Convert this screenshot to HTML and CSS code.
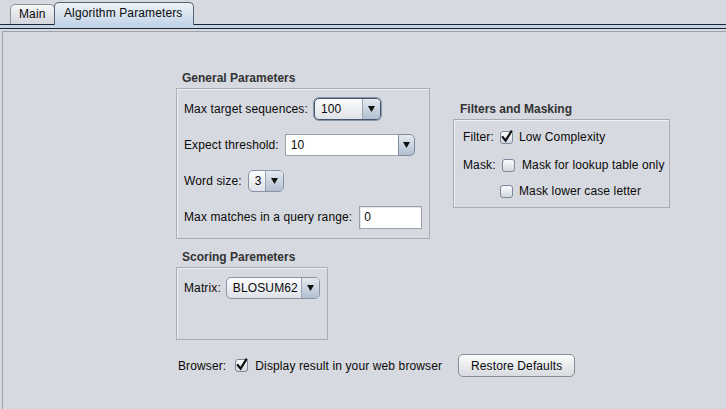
FILE: index.html
```html
<!DOCTYPE html>
<html>
<head>
<meta charset="utf-8">
<link rel="stylesheet" href="styles.css">
</head>
<body>
<div class="app">
  <div class="tabs">
    <div class="tab">Main</div>
    <div class="tab tab-sel">Algorithm Parameters</div>
  </div>
  <div class="strip"></div>
  <div class="panel">
    <div class="top">
      <div class="left">
        <div class="gtitle">General Parameters</div>
        <div class="box box-general">
          <div class="row">
            <span class="lbl">Max target sequences:</span>
            <div class="combo combo-focus w-tgt"><span class="cv">100</span><span class="ca"><svg width="7" height="6" viewBox="0 0 7 6"><polygon points="0,0 7,0 3.5,6" fill="#111"/></svg></span></div>
          </div>
          <div class="row">
            <span class="lbl">Expect threshold:</span>
            <div class="combo-edit"><span class="field">10</span><span class="ebtn"><svg width="7" height="6" viewBox="0 0 7 6"><polygon points="0,0 7,0 3.5,6" fill="#111"/></svg></span></div>
          </div>
          <div class="row">
            <span class="lbl">Word size:</span>
            <div class="combo w-word"><span class="cv">3</span><span class="ca"><svg width="7" height="6" viewBox="0 0 7 6"><polygon points="0,0 7,0 3.5,6" fill="#111"/></svg></span></div>
          </div>
          <div class="row row-wide">
            <span class="lbl">Max matches in a query range:</span>
            <span class="tfield">0</span>
          </div>
        </div>
        <div class="gtitle gtitle-second">Scoring Paremeters</div>
        <div class="box box-scoring">
          <div class="row row-tight">
            <span class="lbl">Matrix:</span>
            <div class="combo w-matrix"><span class="cv">BLOSUM62</span><span class="ca"><svg width="7" height="6" viewBox="0 0 7 6"><polygon points="0,0 7,0 3.5,6" fill="#111"/></svg></span></div>
          </div>
        </div>
      </div>
      <div class="right">
        <div class="gtitle gtitle-filter">Filters and Masking</div>
        <div class="box box-filter">
          <div class="frow">
            <span class="flbl">Filter:</span>
            <span class="cb"><svg width="13" height="13" viewBox="0 0 13 13"><path d="M2.8 6.2 L5.6 9.6 L11.2 0.6" fill="none" stroke="#111" stroke-width="2.2" stroke-linecap="square"/></svg></span>
            <span>Low Complexity</span>
          </div>
          <div class="frow frow-2">
            <span class="flbl flbl-mask">Mask:</span>
            <span class="cb"></span>
            <span class="ctext-wide">Mask for lookup table only</span>
          </div>
          <div class="frow frow-3">
            <span class="flbl"></span>
            <span class="cb"></span>
            <span>Mask lower case letter</span>
          </div>
        </div>
      </div>
    </div>
    <div class="bottom">
      <span>Browser:</span>
      <span class="cb cb-browser"><svg width="13" height="13" viewBox="0 0 13 13"><path d="M2.8 6.2 L5.6 9.6 L11.2 0.6" fill="none" stroke="#111" stroke-width="2.2" stroke-linecap="square"/></svg></span>
      <span>Display result in your web browser</span>
      <div class="btn">Restore Defaults</div>
    </div>
  </div>
</div>
</body>
</html>
```

FILE: styles.css
```css
body {
  margin: 0;
  background: #d6d9df;
  font-family: "Liberation Sans", Arial, sans-serif;
  font-size: 12px;
  letter-spacing: 0.12px;
  color: #0a0a0a;
}

.app {
  width: 726px;
  height: 409px;
  overflow: hidden;
}

/* Tabs */
.tabs {
  display: flex;
  align-items: flex-end;
  height: 24px;
  padding-left: 10px;
}

.tab {
  box-sizing: border-box;
  height: 20px;
  width: 45px;
  padding-left: 8px;
  line-height: 19px;
  border: 1px solid #8e949c;
  border-bottom: none;
  border-radius: 5px 5px 0 0;
  background: linear-gradient(#f5f6f8, #d3d6db);
  white-space: nowrap;
}

.tab-sel {
  position: relative;
  z-index: 1;
  height: 23px;
  width: 140px;
  margin-left: -1px;
  margin-bottom: -1px;
  padding-left: 9px;
  line-height: 21px;
  border-color: #566173;
  background: linear-gradient(#eef3f8, #c3d4e8);
}

.strip {
  height: 3px;
  border-top: 1px solid #1f2535;
  border-bottom: 1px solid #1f2535;
  background: #c3d4e8;
}

.panel {
  box-sizing: border-box;
  height: 378px;
  margin: 2px 0 0 2px;
  border-top: 1px solid #9ea3aa;
  border-left: 1px solid #9ea3aa;
  padding: 39px 0 0 173px;
}

.top {
  display: flex;
  align-items: flex-start;
}

.right {
  margin-left: 23px;
  margin-top: 31px;
}

.gtitle {
  font-weight: bold;
  letter-spacing: 0;
  line-height: 14px;
  margin-bottom: 3px;
  padding-left: 6px;
  color: #333;
  white-space: nowrap;
}

.gtitle-second {
  margin-top: 11px;
}

.gtitle-filter {
  padding-left: 7px;
}

.box {
  box-sizing: border-box;
  border: 1px solid #a9adb3;
  box-shadow: inset 1px 1px 0 #eef0f3;
}

.box-general {
  width: 254px;
  height: 151px;
  padding: 9px 0 10px 7px;
  display: flex;
  flex-direction: column;
  gap: 14px;
}

.box-scoring {
  width: 152px;
  height: 73px;
  padding: 9px 0 0 7px;
}

.box-filter {
  width: 217px;
  height: 89px;
  padding: 7px 0 6px 9px;
}

.row {
  display: flex;
  align-items: center;
  height: 22px;
  gap: 6px;
  white-space: nowrap;
}

.row-wide {
  gap: 7px;
}

.row-tight {
  gap: 5px;
}

/* Combo boxes */
.combo {
  box-sizing: border-box;
  display: flex;
  height: 22px;
  border: 1px solid #8a93a3;
  border-radius: 5px;
  background: linear-gradient(#fdfdfe, #dde1e7);
  overflow: hidden;
}

.combo-focus {
  border-color: #46556b;
  box-shadow: 0 0 0 1px #8796ab;
}

.w-tgt { width: 67px; }
.w-word { width: 36px; }
.w-matrix { width: 94px; }

.cv {
  flex: 1;
  padding-left: 6px;
  line-height: 20px;
}

.ca {
  width: 17px;
  border-left: 1px solid #98a2b1;
  background: linear-gradient(#e4eaf1, #b1bfd0);
  display: flex;
  align-items: center;
  justify-content: center;
}

.combo-edit {
  display: flex;
  height: 22px;
  width: 130px;
}

.field {
  box-sizing: border-box;
  width: 113px;
  height: 22px;
  border: 1px solid #9aa0a8;
  border-right: none;
  background: #fff;
  padding-left: 5px;
  line-height: 20px;
}

.ebtn {
  box-sizing: border-box;
  width: 17px;
  height: 22px;
  border: 1px solid #7f8a9b;
  border-radius: 0 5px 5px 0;
  background: linear-gradient(#e4eaf1, #b1bfd0);
  display: flex;
  align-items: center;
  justify-content: center;
}

.tfield {
  box-sizing: border-box;
  width: 63px;
  height: 23px;
  border: 1px solid #9aa0a8;
  box-shadow: inset 1px 1px 0 #e4e6ea;
  background: #fff;
  padding-left: 4px;
  line-height: 21px;
}

/* Filter rows */
.frow {
  display: flex;
  align-items: center;
  height: 20px;
  white-space: nowrap;
}

.frow-2 { margin-top: 8px; }
.frow-3 { margin-top: 6px; }

.flbl {
  width: 37px;
}

.flbl-mask {
  width: 39px;
}

.ctext-wide {
  margin-left: 1px;
}

.cb {
  box-sizing: border-box;
  display: block;
  width: 13px;
  height: 13px;
  margin-right: 6px;
  border: 1px solid #7d889a;
  border-radius: 3px;
  background: linear-gradient(#fbfcfd, #d3d9e2);
  flex-shrink: 0;
}

.cb svg {
  display: block;
  margin: -1px 0 0 -1px;
  overflow: visible;
}

/* Bottom row */
.bottom {
  display: flex;
  align-items: center;
  height: 23px;
  margin: 14px 0 0 2px;
  white-space: nowrap;
}

.cb-browser {
  margin: 0 7px 0 9px;
}

.btn {
  box-sizing: border-box;
  width: 117px;
  height: 23px;
  margin-left: 16px;
  border: 1px solid #868c96;
  border-radius: 5px;
  background: linear-gradient(#fdfdfd, #d7dadf);
  display: flex;
  align-items: center;
  justify-content: center;
}
```
